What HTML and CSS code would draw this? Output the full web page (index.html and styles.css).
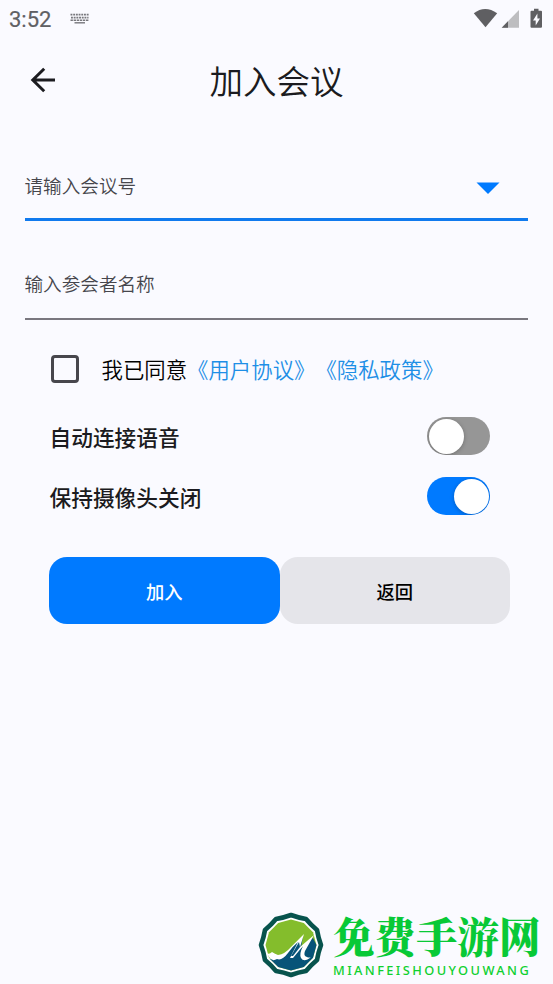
FILE: index.html
```html
<!DOCTYPE html>
<html lang="zh-CN">
<head>
<meta charset="utf-8">
<title>加入会议</title>
<link rel="stylesheet" href="styles.css">
</head>
<body>
<div class="status-bar">
  <span class="clock">3:52</span>
  <svg class="keyboard" width="20" height="12" viewBox="0 0 20 12" fill="none" stroke="#77777c">
    <path d="M.5 1.7H19" stroke-width="1.7" stroke-dasharray="1.9 .8"/>
    <path d="M1 4.6H18.5" stroke-width="1.7" stroke-dasharray="1.9 .8"/>
    <path d="M.5 7.3H19" stroke-width="1.5" stroke-dasharray="2.4 .7"/>
    <path d="M4.5 9.8H15" stroke-width="1.4"/>
  </svg>
  <svg class="signals" width="73" height="22" viewBox="0 0 73 22">
    <path d="M.8 5.3Q12 -3.2 24.2 5.3L12.5 19.3Z" fill="#5f5f62"/>
    <path d="M28.7 19.8L46 2V19.8Z" fill="#bdbdc0"/>
    <path d="M28.7 19.8L35 13.3V19.8Z" fill="#5f5f62"/>
    <path d="M61 .8h4.5v2H68q1 0 1 1v15q0 1-1 1H58.5q-1 0-1-1v-15q0-1 1-1H61Z" fill="#5f5f62"/>
    <path d="M64.4 5.5L60 12.4h2.7v5L67 10.4h-2.6Z" fill="#fafaff"/>
  </svg>
</div>
<header class="app-bar">
  <svg class="back" width="26" height="26" viewBox="0 0 26 26" fill="none" stroke="#1b1b20" stroke-width="3">
    <path d="M25 13H3M14.2 1.8L2.8 13L14.2 24.2"/>
  </svg>
  <h1>加入会议</h1>
</header>
<main>
  <div class="field field-active">
    <span>请输入会议号</span>
    <svg width="24" height="12" viewBox="0 0 24 12"><path d="M.5 .5H23.5L12 12Z" fill="#007aff"/></svg>
  </div>
  <div class="field field-name"><span>输入参会者名称</span></div>
  <section class="options">
    <div class="consent">
      <span class="checkbox"></span>
      <p>我已同意<a>《用户协议》</a><a>《隐私政策》</a></p>
    </div>
    <div class="option"><span>自动连接语音</span><span class="switch"></span></div>
    <div class="option"><span>保持摄像头关闭</span><span class="switch switch-on"></span></div>
  </section>
  <div class="actions">
    <button class="primary">加入</button>
    <button class="secondary">返回</button>
  </div>
</main>
<footer class="brand">
  <svg width="68" height="66" viewBox="-34 -33 68 66">
    <path d="M30 0Q27.3 7.3 26 15Q20 20 15 26Q7.3 27.3 0 30Q-7.3 27.3 -15 26Q-20 20 -26 15Q-27.3 7.3 -30 0Q-27.3 -7.3 -26 -15Q-20 -20 -15 -26Q-7.3 -27.3 0 -30Q7.3 -27.3 15 -26Q20 -20 26 -15Q27.3 -7.3 30 0Z" fill="#fff" stroke="#07534d" stroke-width="4.6" stroke-linejoin="round"/>
    <path d="M25.5 0L22 12.8L12.8 22L0 25.5L-12.8 22L-22 12.8L-25.5 0L-22 -12.8L-12.8 -22L0 -25.5L12.8 -22L22 -12.8Z" fill="#84bd2c"/>
    <path d="M-21 14Q-9 14 -1 4L12 -9L10 3L22 -7L25.5 0L22 12.8L12.8 22L0 25.5L-12.8 22Z" fill="#075478"/>
    <path d="M-24 8Q-22 10 -19 7Q-16 9 -13 10Q-6 9 0 2L13 -11L9 2L23 -10L14 6Q12 11 16 12Q18 13 20 12Q13 18 10 13Q8 9 12 1L2 13H-1L7 -3Q2 1 -3 8Q-9 16 -14 14Q-19 17 -22 12Z" fill="#fff"/>
    <path d="M8 -3L0 11L2 11L9 2Z" fill="#075478"/>
  </svg>
  <div class="brand-text">
    <strong>免费手游网</strong>
    <span>MIANFEISHOUYOUWANG</span>
  </div>
</footer>
</body>
</html>
```

FILE: styles.css
```css
* { box-sizing: border-box; }
body {
  margin: 0;
  width: 553px;
  height: 984px;
  overflow: hidden;
  display: flex;
  flex-direction: column;
  background: #fafaff;
  color: #1b1b20;
  font-family: "Noto Sans CJK SC", sans-serif;
  text-spacing-trim: space-all;
}
.status-bar {
  display: flex;
  height: 40px;
  padding: 8px 7px 0 9px;
}
.clock {
  width: 61px;
  font: 400 22px/24px Roboto, sans-serif;
  -webkit-text-stroke: .2px #606064;
  color: #606064;
}
.keyboard { margin-top: 5px; }
.signals { margin-left: auto; }
.app-bar {
  display: grid;
  grid-template-columns: 60px 1fr 60px;
  align-items: center;
  height: 79px;
}
.back { margin-left: 30px; }
h1 {
  margin: 0;
  font-size: 33.5px;
  line-height: 48px;
  font-weight: 350;
  text-align: center;
}
main { padding: 43px 25px 0 24.5px; }
.field {
  display: flex;
  justify-content: space-between;
  font-size: 18.6px;
  line-height: 28px;
  font-weight: 350;
  color: #46464c;
}
.field-active {
  height: 59px;
  padding: 9px 28px 0 0;
  border-bottom: 3px solid #107aee;
}
.field-active svg { margin-top: 11px; }
.field-name {
  height: 99px;
  padding-top: 48px;
  border-bottom: 2px solid #79777f;
}
.options { padding: 32px 38px 0 25px; }
.consent {
  display: flex;
  align-items: center;
  height: 34px;
  margin-bottom: 19px;
}
.checkbox {
  width: 28px;
  height: 28px;
  margin: 0 23px 0 1px;
  border: 3px solid #47464c;
  border-radius: 4px;
}
.consent p {
  margin: -2px 0 0;
  font-size: 21.4px;
  font-weight: 350;
  color: #000;
  white-space: nowrap;
}
.consent a { color: #1e8fe6; }
.option {
  display: flex;
  align-items: center;
  justify-content: space-between;
  height: 60px;
  font-size: 21.7px;
  font-weight: 500;
}
.option > span:first-child { margin-top: 2px; }
.switch {
  display: flex;
  width: 63px;
  height: 38px;
  margin-top: 2px;
  padding: 1.5px;
  border-radius: 19px;
  overflow: hidden;
  background: #969696;
}
.switch::before {
  content: "";
  width: 35px;
  height: 35px;
  border-radius: 50%;
  background: #fff;
  box-shadow: 0 1px 4px rgba(0, 0, 0, .25);
}
.switch-on { justify-content: flex-end; background: #007aff; }
.actions {
  display: grid;
  grid-template-columns: 1fr 1fr;
  padding: 32px 18px 0 24.5px;
}
button {
  height: 67px;
  padding: 0;
  border: 0;
  border-radius: 18px;
  font: 500 18.3px "Noto Sans CJK SC", sans-serif;
}
.primary { background: #007aff; color: #fff; }
.secondary { background: #e5e5ea; color: #000; }
.brand {
  display: flex;
  margin-top: auto;
  height: 72px;
  padding-left: 257px;
}
.brand-text {
  display: flex;
  flex-direction: column;
  margin-left: 8px;
  white-space: nowrap;
}
.brand strong {
  font: 900 41.5px/46px "Noto Serif CJK SC", "Noto Sans CJK SC", serif;
  color: #08c936;
}
.brand span {
  margin-top: 4px;
  font: 500 12.8px/16px "Noto Sans", sans-serif;
  letter-spacing: 2.4px;
  color: #10d02f;
}
```
